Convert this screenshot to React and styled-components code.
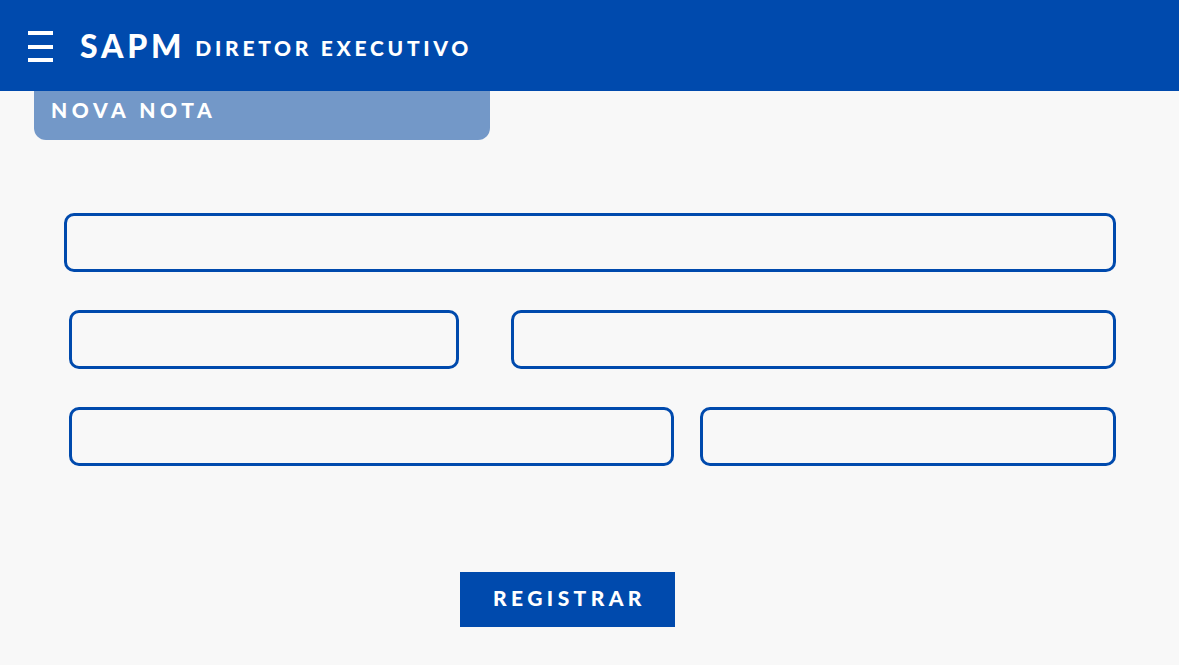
import styled, { createGlobalStyle } from "styled-components";

const GlobalStyle = createGlobalStyle`
  * { box-sizing: border-box; }
  body {
    margin: 0;
    background-color: #f8f8f8;
    font-family: "Lato", "Liberation Sans", sans-serif;
  }
`;

const BLUE = "#004aad";

const Header = styled.header`
  height: 91px;
  background-color: ${BLUE};
  display: flex;
  align-items: center;
  padding-left: 28px;
  color: #ffffff;
`;

const Burger = styled.div`
  width: 25px;
  display: flex;
  flex-direction: column;
  gap: 9.5px;
  margin-right: 27px;
  margin-top: 2px;

  span {
    display: block;
    height: 4px;
    background-color: #ffffff;
  }
`;

const Brand = styled.h1`
  margin: 0;
  font-size: 32px;
  font-weight: 900;
  letter-spacing: 3.8px;
  margin-right: 10px;
`;

const Role = styled.span`
  font-size: 21px;
  font-weight: 900;
  letter-spacing: 3.7px;
  margin-top: 3px;
`;

const Tab = styled.div`
  margin-left: 34px;
  width: 456px;
  height: 49px;
  background-color: #7398c8;
  border-radius: 0 0 12px 12px;
  padding: 6px 0 0 17px;
  color: #ffffff;
  font-size: 21px;
  font-weight: 900;
  letter-spacing: 4.6px;
`;

const Form = styled.form`
  display: flex;
  flex-direction: column;
  padding: 73px 0 0 64px;
  gap: 38px;
`;

const Row = styled.div`
  display: flex;
  gap: ${(p) => p.$gap || 0}px;
  padding-left: ${(p) => p.$indent || 0}px;
`;

const Field = styled.input`
  width: ${(p) => p.$w}px;
  height: 59px;
  border: 3px solid ${BLUE};
  border-radius: 10px;
  background: transparent;
  outline: none;
`;

const Submit = styled.button`
  margin: 68px 0 0 396px;
  width: 215px;
  height: 55px;
  padding: 0 0 4px 4px;
  border: none;
  background-color: ${BLUE};
  color: #ffffff;
  font-family: "Lato", "Liberation Sans", sans-serif;
  font-size: 21px;
  font-weight: 900;
  letter-spacing: 4.4px;
  align-self: flex-start;
`;

export default function App() {
  return (
    <>
      <GlobalStyle />
      <Header>
        <Burger>
          <span />
          <span />
          <span />
        </Burger>
        <Brand>SAPM</Brand>
        <Role>DIRETOR EXECUTIVO</Role>
      </Header>
      <Tab>NOVA NOTA</Tab>
      <Form onSubmit={(e) => e.preventDefault()}>
        <Row>
          <Field $w={1052} />
        </Row>
        <Row $indent={5} $gap={52}>
          <Field $w={390} />
          <Field $w={605} />
        </Row>
        <Row $indent={5} $gap={26}>
          <Field $w={605} />
          <Field $w={416} />
        </Row>
        <Submit type="submit">REGISTRAR</Submit>
      </Form>
    </>
  );
}
